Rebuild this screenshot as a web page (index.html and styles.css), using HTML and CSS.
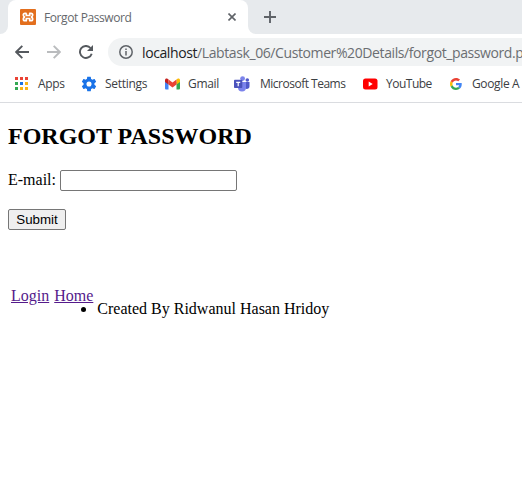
FILE: index.html
```html
<!DOCTYPE html>
<html lang="en">
<head>
<meta charset="utf-8">
<title>Forgot Password</title>
<link rel="stylesheet" href="styles.css">
</head>
<body>
<header class="browser">
  <div class="tabs">
    <div class="tab-edge"></div>
    <div class="tab">
      <svg class="favicon" width="16" height="16" viewBox="0 0 16 16"><rect width="16" height="16" rx="1" fill="#e36f1e"/><path d="M6.500 4.300H5a1.700 1.700 0 0 0-1.700 1.700c0 .9.500 1.400 1.200 2-.7.600-1.200 1.100-1.200 2A1.700 1.700 0 0 0 5 11.700h1.300V9.500h3.400v2.200H11a1.700 1.700 0 0 0 1.700-1.700c0-.9-.5-1.400-1.200-2 .7-.6 1.200-1.100 1.200-2A1.700 1.700 0 0 0 11 4.300H9.700v2.200H6.300V4.300" fill="none" stroke="#fff" stroke-width="1.700" stroke-linejoin="round"/></svg>
      <span class="tab-title">Forgot Password</span>
      <svg class="close" width="8" height="8" viewBox="0 0 8 8"><path d="M.5.5l7 7M7.500.5l-7 7" stroke="#5f6368" stroke-width="1.600"/></svg>
    </div>
    <div class="strip">
      <svg width="12" height="12" viewBox="0 0 12 12"><path d="M6 0v12M0 6h12" stroke="#5f6368" stroke-width="1.900"/></svg>
    </div>
  </div>
  <div class="toolbar">
    <svg class="back" width="14" height="14" viewBox="0 0 14 14"><path d="M14 7H1.500M7.300 .8L1.200 7l6.100 6.200" fill="none" stroke="#55595e" stroke-width="1.900"/></svg>
    <svg class="forward" width="14" height="14" viewBox="0 0 14 14"><path d="M0 7h12.500M6.700 .8L12.800 7l-6.100 6.200" fill="none" stroke="#babcbe" stroke-width="1.900"/></svg>
    <svg class="reload" width="14" height="14" viewBox="0 0 14 14"><path d="M12.700 8.700A6 6 0 1 1 11.500 3" fill="none" stroke="#55595e" stroke-width="1.900"/><path d="M14 0v6H8z" fill="#55595e"/></svg>
    <div class="address">
      <svg width="14" height="14" viewBox="0 0 14 14"><circle cx="7" cy="7" r="6.200" fill="none" stroke="#5f6368" stroke-width="1.500"/><path d="M7 6v4.500M7 3.500v1.500" stroke="#5f6368" stroke-width="1.500"/></svg>
      <span class="url"><b>localhost</b>/Labtask_06/Customer%20Details/forgot_password.p</span>
    </div>
  </div>
  <nav class="bookmarks">
    <div class="bookmark apps">
      <svg width="14" height="14" viewBox="0 0 14 14"><path d="M0 0h3v3H0zM5 0h3v3H5zM10 0h3v3h-3z" fill="#ea4335"/><path d="M0 5h3v3H0zM0 10h3v3H0z" fill="#34a853"/><path d="M5 5h3v3H5z" fill="#1a73e8"/><path d="M10 5h3v3h-3zM5 10h3v3H5zM10 10h3v3h-3z" fill="#f9b418"/></svg>
      <span>Apps</span>
    </div>
    <div class="bookmark settings">
      <svg width="16" height="16" viewBox="1 1 22 22"><path fill="#1a73e8" d="M19.430 12.980c.04-.32.07-.64.07-.98s-.03-.66-.07-.98l2.110-1.650c.19-.15.24-.42.12-.64l-2-3.460c-.12-.22-.39-.3-.61-.22l-2.490 1c-.52-.4-1.080-.73-1.690-.98l-.38-2.650A.488.488 0 0 0 14 2h-4c-.25 0-.46.18-.49.42l-.38 2.650c-.61.25-1.170.59-1.690.98l-2.490-1c-.23-.09-.49 0-.61.22l-2 3.460c-.13.22-.07.49.12.64l2.110 1.650c-.04.32-.07.65-.07.98s.03.66.07.98l-2.110 1.650c-.19.15-.24.42-.12.64l2 3.460c.12.22.39.3.61.22l2.490-1c.52.4 1.080.73 1.690.98l.38 2.650c.03.24.24.42.49.42h4c.25 0 .46-.18.49-.42l.38-2.650c.61-.25 1.170-.59 1.690-.98l2.490 1c.23.09.49 0 .61-.22l2-3.460c.12-.22.07-.49-.12-.64l-2.110-1.650zM12 15.500a3.500 3.500 0 1 1 0-7 3.500 3.500 0 0 1 0 7z"/></svg>
      <span>Settings</span>
    </div>
    <div class="bookmark gmail">
      <svg width="15" height="12" viewBox="0 0 15 12"><path d="M0 2v8.500q0 1 1 1h2.500V4z" fill="#4285f4"/><path d="M15 2v8.500q0 1-1 1h-2.500V4z" fill="#34a853"/><path d="M11.500 1.500l1-.8C13.600 0 15 .7 15 2v2l-3.500 2.600z" fill="#fbbc04"/><path d="M3.500 1.500l-1-.8C1.400 0 0 .7 0 2v2l3.500 2.600z" fill="#c5221f"/><path d="M3.500 1.500l4 3 4-3v5l-4 3-4-3z" fill="#ea4335"/></svg>
      <span>Gmail</span>
    </div>
    <div class="bookmark teams">
      <svg width="16" height="16" viewBox="0 0 16 16"><circle cx="13.300" cy="4" r="1.800" fill="#5059c9"/><path d="M11 6h4.500v4.500a2.500 2.500 0 0 1-4.500 1.500z" fill="#5059c9"/><circle cx="8.600" cy="2.600" r="2.400" fill="#7b83eb"/><path d="M4 6h8v5.500a4 4 0 0 1-8 0z" fill="#7b83eb"/><rect y="3.800" width="8.300" height="8.300" rx=".8" fill="#4b53bc"/><path d="M2.200 6.300h4M4.200 6v4.200" stroke="#fff" stroke-width="1.200"/></svg>
      <span>Microsoft Teams</span>
    </div>
    <div class="bookmark youtube">
      <svg width="15" height="12" viewBox="0 0 15 12"><rect y=".5" width="14.500" height="11" rx="2.500" fill="#f00"/><path d="M5.700 3.600v4.800L9.700 6z" fill="#fff"/></svg>
      <span>YouTube</span>
    </div>
    <div class="bookmark google">
      <svg width="12" height="12" viewBox="0 0 48 48"><path fill="#ea4335" d="M24 9.500c3.540 0 6.710 1.220 9.210 3.600l6.850-6.850C35.900 2.380 30.470 0 24 0 14.620 0 6.510 5.380 2.560 13.220l7.980 6.190C12.430 13.720 17.740 9.500 24 9.500z"/><path fill="#4285f4" d="M46.980 24.550c0-1.570-.15-3.090-.38-4.550H24v9.020h12.940c-.58 2.960-2.260 5.480-4.780 7.180l7.730 6c4.510-4.180 7.090-10.360 7.090-17.650z"/><path fill="#fbbc05" d="M10.530 28.590A14.500 14.500 0 0 1 9.770 24c0-1.600.27-3.140.76-4.590l-7.980-6.190A23.900 23.900 0 0 0 0 24c0 3.880.92 7.540 2.560 10.780z"/><path fill="#34a853" d="M24 48c6.480 0 11.930-2.130 15.890-5.810l-7.730-6C30.010 37.640 27.240 38.500 24 38.500c-6.260 0-11.570-4.220-13.470-9.910l-7.980 6.190C6.510 42.620 14.620 48 24 48z"/></svg>
      <span>Google A</span>
    </div>
  </nav>
</header>
<main>
  <h2>FORGOT PASSWORD</h2>
  <form>
    <div class="field"><label for="email">E-mail:</label><input id="email" type="text"></div>
    <button type="button">Submit</button>
  </form>
  <footer>
    <div class="links"><a href="#login">Login</a><a href="#home">Home</a></div>
    <ul><li>Created By Ridwanul Hasan Hridoy</li></ul>
  </footer>
</main>
</body>
</html>
```

FILE: styles.css
```css
* { box-sizing: border-box; }
html, body { margin: 0; height: 100%; overflow: hidden; background: #fff; }
body { font-family: "Liberation Serif", "Times New Roman", serif; font-size: 16px; color: #000; }
svg { display: block; flex: none; }

.browser { font-family: "Open Sans", "Segoe UI", sans-serif; font-size: 12px; height: 103px; border-bottom: 1px solid #dadce0; }
.tabs { display: flex; height: 34px; background: #fff; }
.tab-edge { width: 8px; background: #e7eaed; border-bottom-right-radius: 8px; }
.tab { width: 240px; display: flex; align-items: center; padding-left: 12px; position: relative; background: linear-gradient(#e7eaed, #e7eaed) top / 100% 8px no-repeat; }
.tab::before { content: ""; position: absolute; inset: 0; background: #fff; border-radius: 8px 8px 0 0; }
.tab > * { position: relative; }
.tab-title { width: 87px; margin-left: 8px; color: #65686c; font-size: 12px; letter-spacing: -.4px; white-space: nowrap; }
.close { margin-left: 97px; }
.strip { flex: 1; padding: 11px 0 0 16px; background: #e7eaed; border-bottom-left-radius: 8px; }

.toolbar { display: flex; align-items: center; height: 36px; padding-left: 15px; }
.forward { margin-left: 18px; }
.reload { margin-left: 18px; }
.address { flex: 1; min-width: 0; height: 28px; display: flex; align-items: center; margin-left: 15px; padding-left: 11px; background: #f1f3f4; border-radius: 14px 0 0 14px; overflow: hidden; }
.url { margin-left: 9px; color: #6b6e72; font-size: 14px; letter-spacing: -.4px; white-space: nowrap; }
.url b { font-weight: 400; color: #202124; }

.bookmarks { display: flex; align-items: center; height: 28px; overflow: hidden; color: #3c4043; }
.bookmark { display: flex; flex: none; align-items: center; white-space: nowrap; letter-spacing: -.3px; }
.bookmark span { margin-bottom: 2px; }
.apps { width: 66px; padding-left: 15px; gap: 9px; }
.settings { width: 84px; padding-left: 15px; gap: 8px; }
.gmail { width: 70px; padding-left: 15px; gap: 8px; }
.teams { width: 128px; padding-left: 14px; gap: 10px; letter-spacing: -.5px; }
.youtube { width: 88px; padding-left: 15px; gap: 8px; letter-spacing: -.5px; }
.google { padding-left: 14px; gap: 10px; letter-spacing: -.35px; }

main { padding: 20px 8px 0; }
h2 { margin: 0; font-size: 24px; line-height: 27px; }
.field { display: flex; align-items: center; height: 21px; margin-top: 20px; }
.field label { margin-bottom: 1px; }
.field input { width: 177px; height: 21px; margin: 0 0 0 4px; padding: 1px 2px; border: 1px solid #767676; border-radius: 2px; }
button { display: block; width: 58px; height: 21px; margin-top: 18px; padding: 0; border: 1px solid #767676; border-radius: 2px; background: #efefef; color: #000; font: 13.333px "Liberation Sans", Arial, sans-serif; }
footer { display: flex; margin-top: 57px; line-height: 18px; white-space: nowrap; }
.links { display: flex; gap: 5px; padding-left: 3px; }
.links a { color: #551a8b; }
ul { margin: 13px 0 0 4px; padding: 0; }
```
